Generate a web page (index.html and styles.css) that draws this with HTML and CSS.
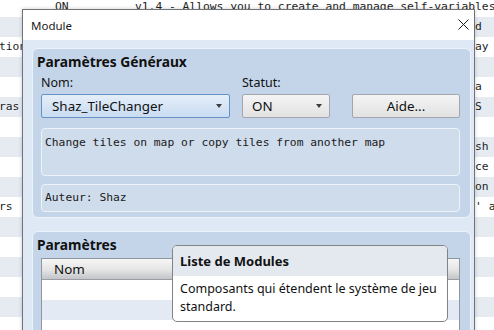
FILE: index.html
```html
<!DOCTYPE html>
<html>
<head>
<meta charset="utf-8">
<link rel="stylesheet" href="styles.css">
</head>
<body>
<div class="bglist">
  <div class="row"><span class="c1"></span><span class="c2">ON</span><span class="c3 full">v1.4 - Allows you to create and manage self-variables</span></div>
  <div class="row alt"><span class="c1"></span><span class="c2"></span><span class="c3"></span><span class="c4">d</span></div>
  <div class="row"><span class="c1">tion</span><span class="c2"></span><span class="c3"></span><span class="c4">ay</span></div>
  <div class="row alt"><span class="c1"></span><span class="c2"></span><span class="c3"></span><span class="c4"></span></div>
  <div class="row"><span class="c1"></span><span class="c2"></span><span class="c3"></span><span class="c4">a</span></div>
  <div class="row alt"><span class="c1">ras</span><span class="c2"></span><span class="c3"></span><span class="c4">S</span></div>
  <div class="row"><span class="c1"></span><span class="c2"></span><span class="c3"></span><span class="c4"></span></div>
  <div class="row alt"><span class="c1"></span><span class="c2"></span><span class="c3"></span><span class="c4">sh</span></div>
  <div class="row"><span class="c1"></span><span class="c2"></span><span class="c3"></span><span class="c4">ce</span></div>
  <div class="row alt"><span class="c1"></span><span class="c2"></span><span class="c3"></span><span class="c4">on</span></div>
  <div class="row"><span class="c1">rs</span><span class="c2"></span><span class="c3"></span><span class="c4">' a</span></div>
  <div class="row alt"><span class="c1"></span><span class="c2"></span><span class="c3"></span><span class="c4"></span></div>
  <div class="row"><span class="c1"></span><span class="c2"></span><span class="c3"></span><span class="c4"></span></div>
  <div class="row alt"><span class="c1"></span><span class="c2"></span><span class="c3"></span><span class="c4"></span></div>
  <div class="row"><span class="c1"></span><span class="c2"></span><span class="c3"></span><span class="c4"></span></div>
  <div class="row alt"><span class="c1"></span><span class="c2"></span><span class="c3"></span><span class="c4"></span></div>
  <div class="row"><span class="c1"></span><span class="c2"></span><span class="c3"></span><span class="c4"></span></div>
</div>

<div class="dialog">
  <div class="titlebar">
    <span class="title">Module</span>
    <svg class="close" width="11" height="11" viewBox="0 0 11 11"><path d="M0.5 0.5 L10.5 10.5 M10.5 0.5 L0.5 10.5" stroke="#1a1a1a" stroke-width="1" fill="none"/></svg>
  </div>
  <div class="dbody">
    <div class="group g1">
      <div class="gtitle">Paramètres Généraux</div>
      <div class="ctrlgrid">
        <div class="lbl">Nom:</div>
        <div class="lbl">Statut:</div>
        <div></div>
        <div class="combo focus"><span>Shaz_TileChanger</span><span class="arrow"></span></div>
        <div class="combo"><span>ON</span><span class="arrow"></span></div>
        <div class="btn">Aide...</div>
      </div>
      <div class="tbox desc">Change tiles on map or copy tiles from another map</div>
      <div class="tbox author">Auteur: Shaz</div>
    </div>
    <div class="group g2">
      <div class="gtitle">Paramètres</div>
      <div class="table">
        <div class="thead"><span class="th">Nom</span></div>
        <div class="trow"></div>
        <div class="trow alt"></div>
        <div class="trow"></div>
      </div>
    </div>
  </div>
</div>

<div class="tooltip">
  <div class="tthead">Liste de Modules</div>
  <div class="ttbody">Composants qui étendent le système de jeu standard.</div>
</div>
</body>
</html>
```

FILE: styles.css
```css
html, body {
  margin: 0;
  padding: 0;
}
body {
  width: 494px;
  height: 330px;
  overflow: hidden;
  position: relative;
  background: #ffffff;
}

/* background list */
.bglist {
  margin-top: -3px;
  margin-left: -1px;
  font-family: "DejaVu Sans Mono", monospace;
  font-size: 11.3px;
  color: #1e1e1e;
}
.row {
  height: 20px;
  line-height: 20px;
  display: grid;
  grid-template-columns: 56px 80px 50ch auto;
  white-space: pre;
  background: #ffffff;
}
.row.alt { background: #e6ebf2; }
.c3 { overflow: hidden; }
.c3.full { overflow: visible; }

/* dialog window */
.dialog {
  position: absolute;
  left: 22px;
  top: 9px;
  width: 451px;
  height: 340px;
  border: 1px solid #6f7378;
  box-shadow: 0 0 4px rgba(0, 0, 0, 0.2);
  background: #dfe9f5;
  font-family: "Noto Sans", sans-serif;
  color: #111;
  display: flex;
  flex-direction: column;
}
.titlebar {
  height: 30px;
  background: #ffffff;
  display: flex;
  align-items: center;
  justify-content: space-between;
  padding: 0 5px 0 8px;
  flex: none;
}
.title {
  font-size: 11.5px;
  color: #1a1a1a;
}
.close { display: block; margin-top: -1px; }

.dbody {
  padding: 8px 3px 0 9px;
  display: flex;
  flex-direction: column;
  gap: 13px;
}
.group {
  background: #c4d5ea;
  border: 1px solid #edf3fa;
  border-radius: 6px;
  padding: 0 10px 5px 8px;
}
.gtitle {
  font-weight: bold;
  font-size: 13.8px;
  line-height: 26px;
  margin-left: -4px;
  color: #111;
}
.ctrlgrid {
  display: grid;
  grid-template-columns: 189px 88px 118px;
  column-gap: 12px;
  grid-template-rows: 19px 24px;
}
.ctrlgrid .btn { margin-left: 10px; }
.lbl {
  font-size: 12.5px;
  line-height: 16px;
}
.combo, .btn {
  height: 24px;
  box-sizing: border-box;
  border: 1px solid #a3a7ad;
  border-radius: 2px;
  background: linear-gradient(#f4f4f4, #e2e2e2);
  display: flex;
  align-items: center;
  justify-content: space-between;
  padding: 0 7px 0 9px;
  font-size: 13.4px;
}
.combo.focus {
  border-color: #6593c8;
  background: linear-gradient(#e4eef9, #c9dcf1);
  padding-left: 10px;
}
.btn {
  justify-content: center;
  padding: 0;
}
.arrow {
  width: 0;
  height: 0;
  border-left: 3.5px solid transparent;
  border-right: 3.5px solid transparent;
  border-top: 4px solid #3c3c3c;
}
.tbox {
  font-family: "DejaVu Sans Mono", monospace;
  font-size: 11.3px;
  background: #cfdcec;
  border: 1px solid #eef3f9;
  border-radius: 4px;
  color: #1a1a1a;
  padding-left: 3px;
}
.desc {
  margin-top: 10px;
  padding-top: 5px;
  line-height: 18px;
  height: 41px;
}
.author {
  margin-top: 8px;
  line-height: 26px;
}
.g2 {
  height: 120px;
}
.table {
  border: 1px solid #8f969e;
  border-bottom: none;
  background: #ffffff;
}
.thead {
  height: 20px;
  background: linear-gradient(#f6f6f6, #e4e4e4 55%, #c3c5c8);
  border-bottom: 1px solid #9a9ea4;
  display: flex;
  align-items: center;
  font-size: 13.4px;
}
.th { padding-left: 12px; }
.trow { height: 20px; background: #ffffff; }
.trow.alt { background: #e3eaf3; }

/* tooltip */
.tooltip {
  position: absolute;
  left: 172px;
  top: 245px;
  width: 274px;
  height: 75px;
  border: 1px solid #838383;
  border-radius: 5px;
  background: #ffffff;
  overflow: hidden;
  font-family: "Noto Sans", sans-serif;
  color: #111;
}
.tthead {
  height: 30px;
  background: #e4e9ef;
  font-weight: bold;
  font-size: 13px;
  line-height: 31px;
  padding-left: 7px;
}
.ttbody {
  font-size: 12.5px;
  line-height: 18px;
  padding: 4px 8px 0 7px;
}
```
